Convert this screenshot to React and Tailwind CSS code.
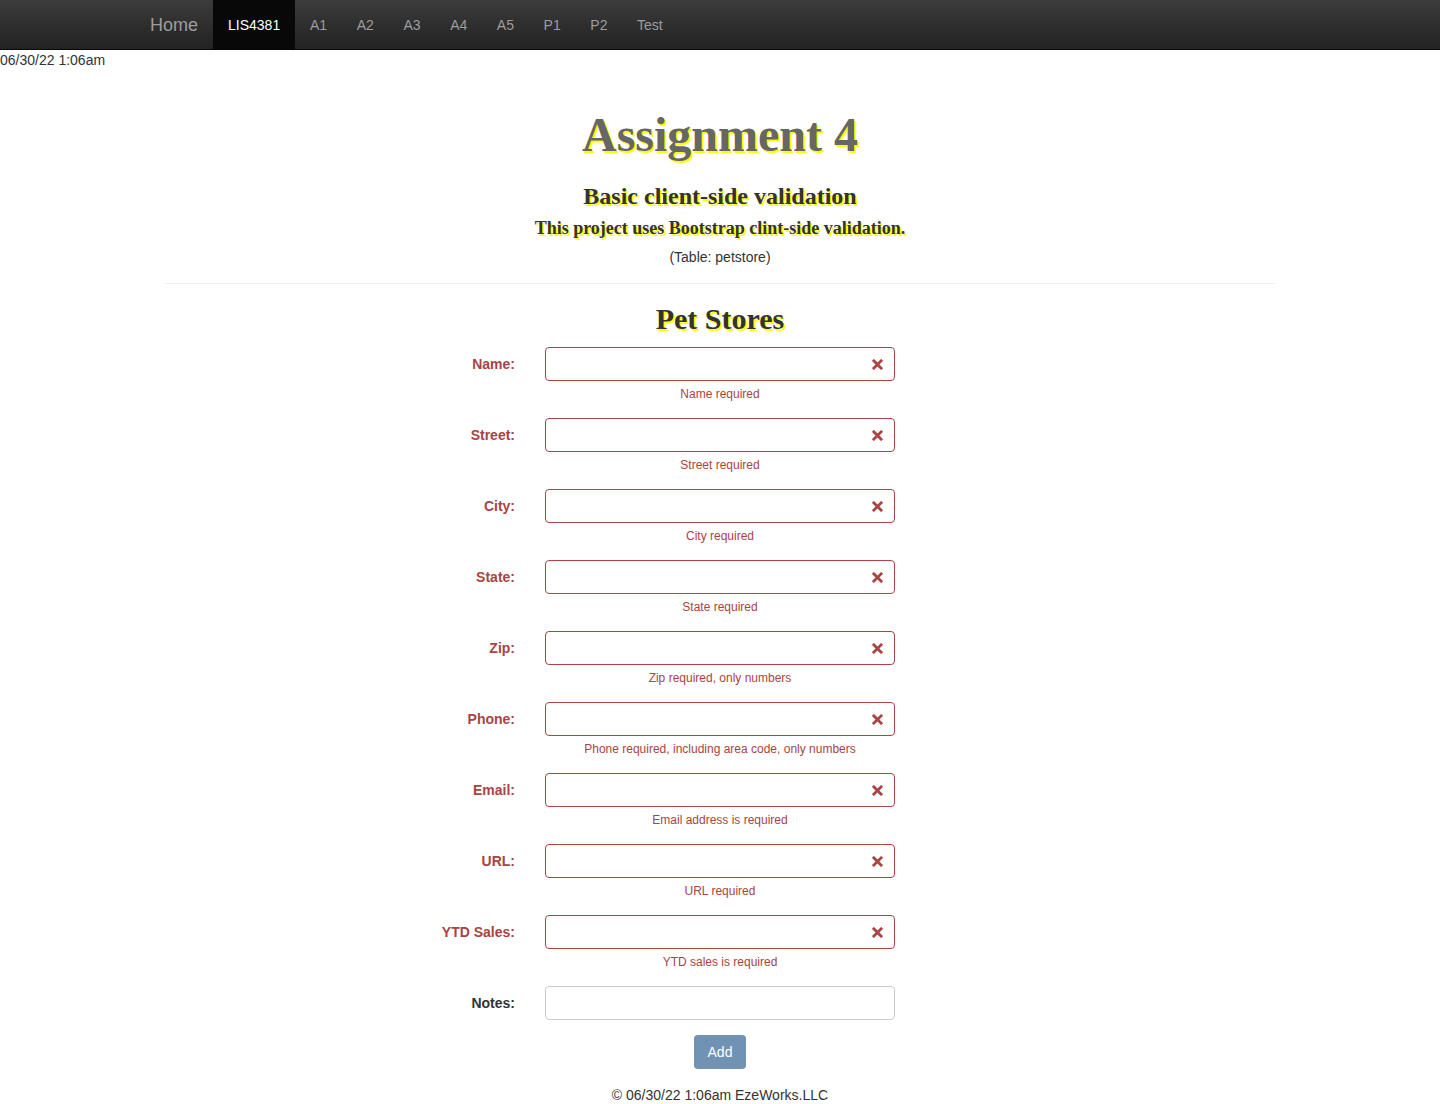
import React from 'react';

const fields = [
  { label: 'Name:', help: 'Name required' },
  { label: 'Street:', help: 'Street required' },
  { label: 'City:', help: 'City required' },
  { label: 'State:', help: 'State required' },
  { label: 'Zip:', help: 'Zip required, only numbers' },
  { label: 'Phone:', help: 'Phone required, including area code, only numbers' },
  { label: 'Email:', help: 'Email address is required' },
  { label: 'URL:', help: 'URL required' },
  { label: 'YTD Sales:', help: 'YTD sales is required' },
];

const navLinks = ['A1', 'A2', 'A3', 'A4', 'A5', 'P1', 'P2', 'Test'];

const RemoveIcon = () => (
  <svg className="w-[11px] h-[11px]" viewBox="0 0 12 12">
    <path d="M2 2 L10 10 M10 2 L2 10" stroke="#a94442" strokeWidth="3" strokeLinecap="square" fill="none" />
  </svg>
);

const App = () => {
  return (
    <div className="min-h-screen bg-white text-[#333] font-['Liberation_Sans',Arial,sans-serif] text-[14px]">
      {/* navbar */}
      <nav className="h-[50px] bg-gradient-to-b from-[#3c3c3c] to-[#222] border-b border-[#080808]">
        <div className="w-[1170px] mx-auto flex h-full">
          <a className="px-[15px] pt-[2px] h-full flex items-center text-[18px] text-[#9d9d9d]">Home</a>
          <a className="px-[15px] pt-[2px] h-full flex items-center bg-[#080808] text-white">LIS4381</a>
          {navLinks.map((l) => (
            <a key={l} className="px-[14.8px] pt-[2px] h-full flex items-center text-[#9d9d9d]">{l}</a>
          ))}
        </div>
      </nav>

      <div className="leading-[20px] h-[20px]">06/30/22 1:06am</div>

      <div className="w-[1170px] mx-auto px-[30px]">
        <div className="text-center font-['Liberation_Serif','Times_New_Roman',serif] font-bold [text-shadow:2px_2px_0_#ffff00]">
          <h1 className="mt-[38px] text-[48px] leading-[53px] text-[#666]">Assignment 4</h1>
          <h2 className="mt-[22px] text-[24px] leading-[26px] text-[#333]">Basic client-side validation</h2>
          <h3 className="mt-[9px] text-[18px] leading-[20px] text-[#333]">This project uses Bootstrap clint-side validation.</h3>
        </div>
        <p className="mt-[9px] text-center leading-[20px]">(Table: petstore)</p>
        <hr className="mt-[16px] border-t border-[#eee]" />
        <h2 className="mt-[18px] text-center font-['Liberation_Serif','Times_New_Roman',serif] font-bold text-[30px] leading-[33px] text-[#333] [text-shadow:2px_2px_0_#ffff00]">
          Pet Stores
        </h2>
      </div>

      <form className="mt-[12px] grid grid-cols-[1fr_350px_1fr] gap-x-[30px]">
        {fields.map((f) => (
          <React.Fragment key={f.label}>
            <label className="h-[34px] flex items-center justify-end font-bold text-[#a94442]">{f.label}</label>
            <div>
              <div className="relative h-[34px] rounded-[4px] border border-[#a94442] bg-white flex items-center justify-end pr-[11px]">
                <RemoveIcon />
              </div>
              <p className="mt-[5px] mb-[15px] text-center text-[12px] leading-[17px] text-[#a94442]">{f.help}</p>
            </div>
            <div />
          </React.Fragment>
        ))}
        <label className="h-[34px] flex items-center justify-end font-bold text-[#333]">Notes:</label>
        <div className="h-[34px] rounded-[4px] border border-[#ccc] bg-white" />
        <div />
      </form>

      <div className="mt-[15px] flex justify-center">
        <button className="w-[52px] h-[34px] rounded-[4px] bg-[#7093b3] text-white">Add</button>
      </div>

      <footer className="mt-[16px] text-center leading-[20px]">© 06/30/22 1:06am EzeWorks.LLC</footer>
    </div>
  );
};

export default App;
